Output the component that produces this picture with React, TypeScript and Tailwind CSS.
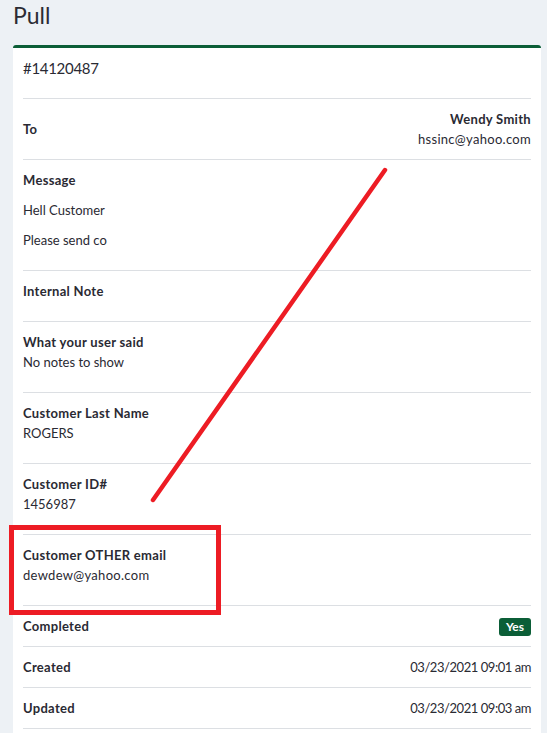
import React from 'react';

const font = { fontFamily: 'Lato, "Noto Sans", sans-serif' };

function Label({ children }: { children: React.ReactNode }) {
  return <p className="font-bold tracking-[0.3px] leading-[20px]">{children}</p>;
}

function Row({ label, children }: { label: string; children?: React.ReactNode }) {
  return (
    <div className="border-t border-[#dcdfe3] pt-[10px] pb-[10px]">
      <Label>{label}</Label>
      <div className="mb-[10px] leading-[20px]">{children}</div>
    </div>
  );
}

function InlineRow({ label, children }: { label: string; children?: React.ReactNode }) {
  return (
    <div className="border-t border-[#dcdfe3] py-[10px] flex items-center justify-between leading-[20px]">
      <Label>{label}</Label>
      <div className="tracking-[-0.45px]">{children}</div>
    </div>
  );
}

export default function App() {
  return (
    <div className="relative min-h-screen bg-[#edf1f5] text-[#2a2a33] text-[13px] tracking-normal" style={font}>
      <div className="h-[45px] pl-[13px] pt-[1px]">
        <h1 className="text-[23px] leading-[29px] text-[#2b2b33]">Pull</h1>
      </div>

      <div className="ml-[13px] w-[528px] bg-white border-t-[3px] border-[#0b5e37] rounded-t-[3px] px-[10px]">
        <div className="pt-[10px] pb-[20px] text-[15px] leading-[20px] tracking-[-0.3px]">#14120487</div>

        <div className="border-t border-[#dcdfe3] py-[10px] flex items-center justify-between leading-[20px]">
          <Label>To</Label>
          <div className="text-right">
            <Label>Wendy Smith</Label>
            <p className="tracking-[0.3px]">hssinc@yahoo.com</p>
          </div>
        </div>

        <div className="border-t border-[#dcdfe3] pt-[10px] pb-[10px] leading-[20px]">
          <Label>Message</Label>
          <div className="mt-[10px]">
            <p className="mb-[10px]">Hell Customer</p>
            <p className="mb-[10px]">Please send co</p>
          </div>
        </div>

        <Row label="Internal Note" />
        <Row label="What your user said">No notes to show</Row>
        <Row label="Customer Last Name">ROGERS</Row>
        <Row label="Customer ID#">1456987</Row>
        <Row label="Customer OTHER email">
          <span className="tracking-[0.3px]">dewdew@yahoo.com</span>
        </Row>

        <InlineRow label="Completed">
          <span className="inline-block bg-[#0b5e37] text-white font-bold text-[12px] leading-[18px] tracking-normal px-[7px] rounded-[3px]">
            Yes
          </span>
        </InlineRow>
        <InlineRow label="Created">03/23/2021 09:01 am</InlineRow>
        <InlineRow label="Updated">03/23/2021 09:03 am</InlineRow>
        <div className="border-t border-[#dcdfe3] h-[10px]" />
      </div>

      {/* annotations */}
      <svg className="absolute left-0 top-0 pointer-events-none" width="547" height="733">
        <line x1="385" y1="170" x2="153" y2="500" stroke="#ed1c24" strokeWidth="4.5" strokeLinecap="round" />
      </svg>
      <div className="absolute left-[9px] top-[525px] w-[212px] h-[90px] border-[5px] border-[#ed1c24] pointer-events-none" />
    </div>
  );
}
